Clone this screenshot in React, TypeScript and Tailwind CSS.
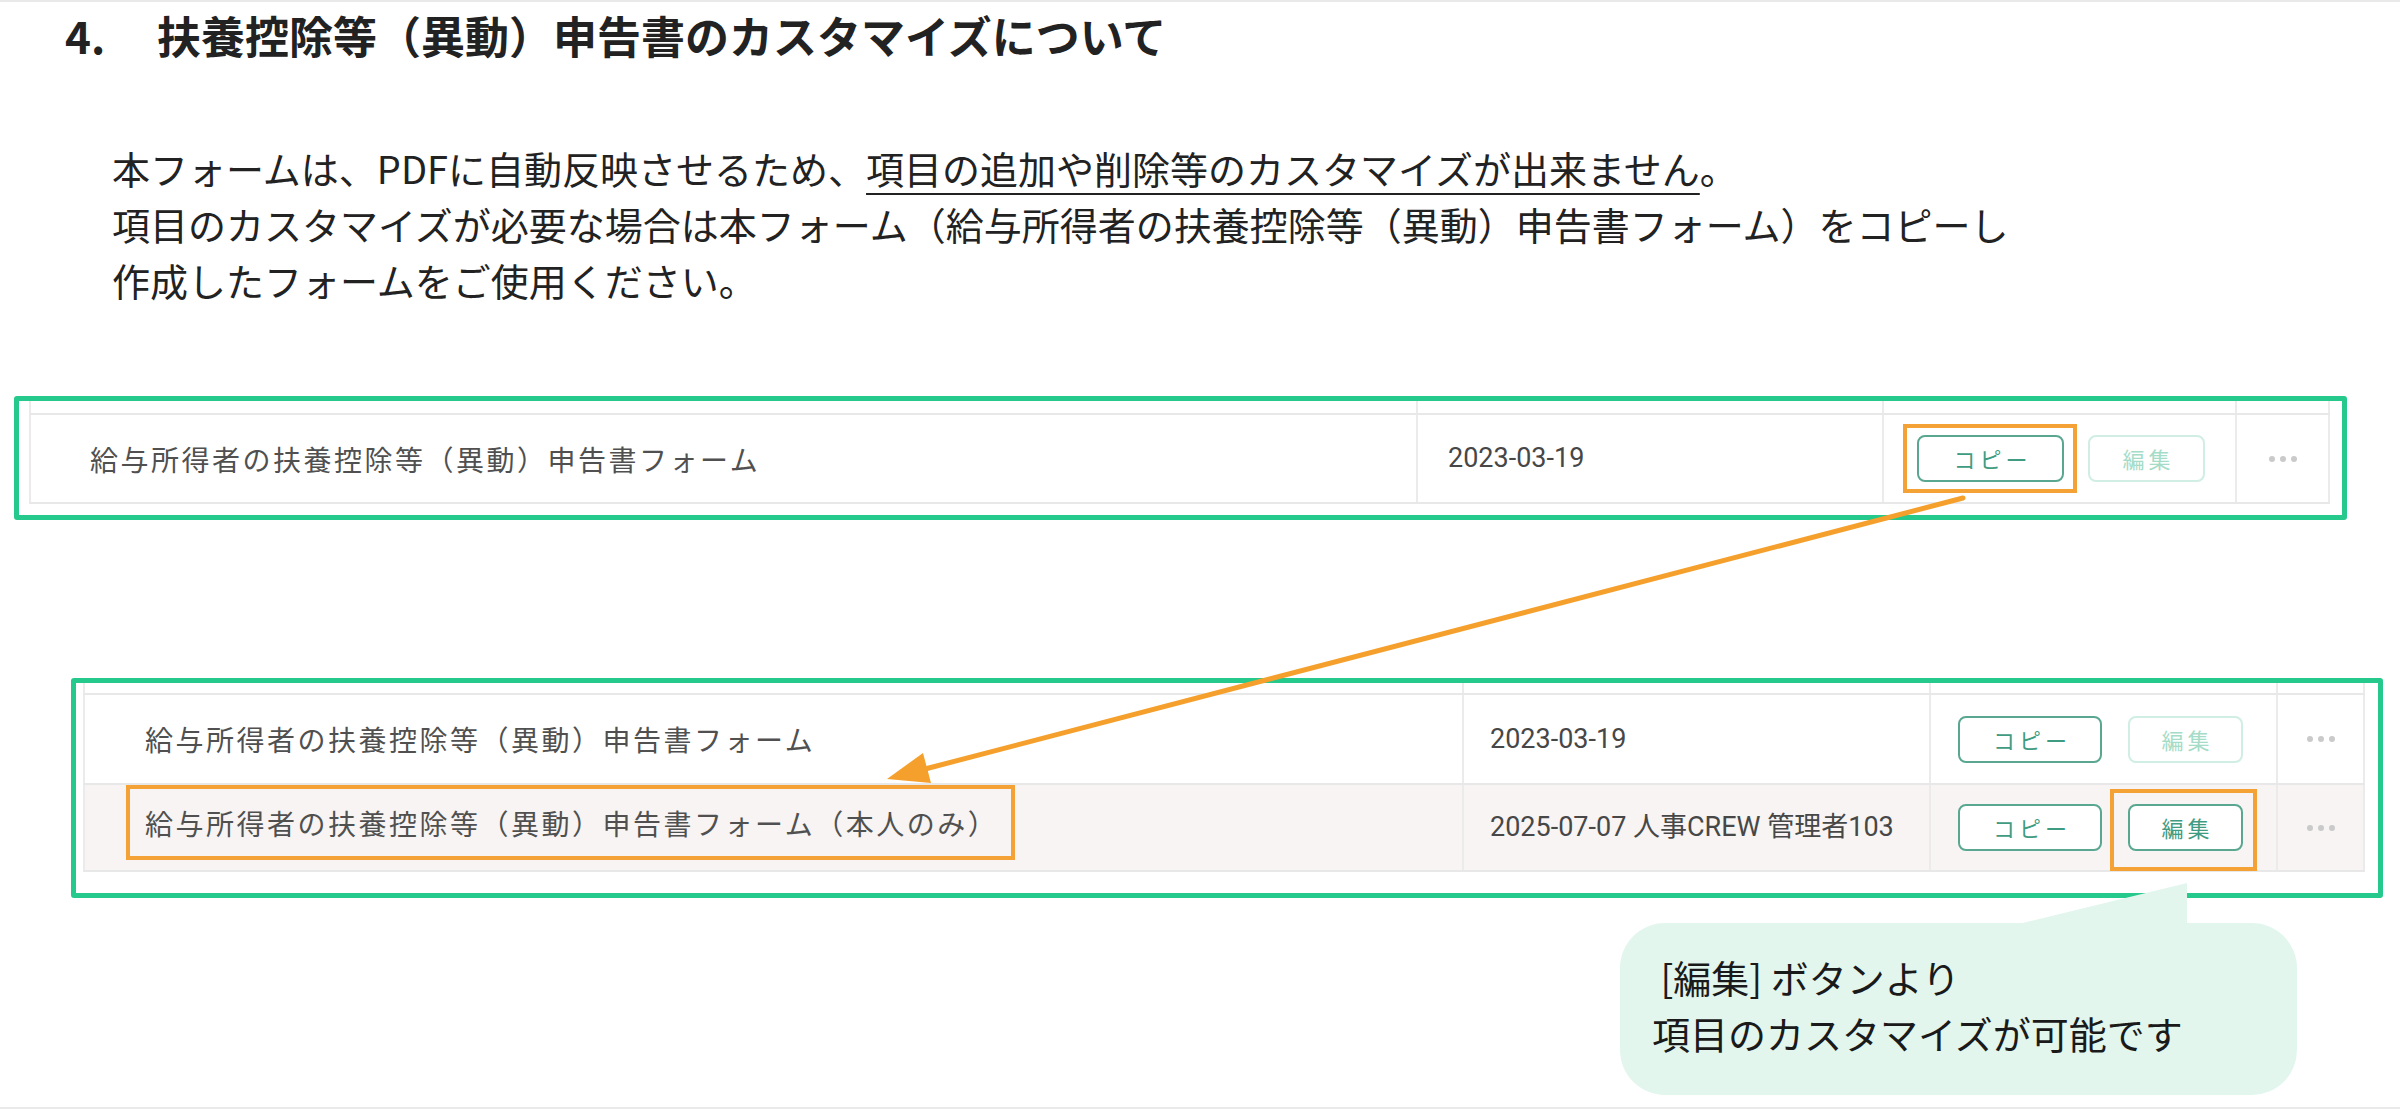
import React from "react";

const JP = "font-['Noto_Sans_CJK_JP','Noto_Sans',sans-serif]";
const RB = "font-['Roboto','Noto_Sans_CJK_JP',sans-serif]";

function Dots() {
  return (
    <div className="flex items-center justify-center gap-[5px]">
      <span className="block h-[6px] w-[6px] rounded-full bg-[#cacaca]" />
      <span className="block h-[6px] w-[6px] rounded-full bg-[#cacaca]" />
      <span className="block h-[6px] w-[6px] rounded-full bg-[#cacaca]" />
    </div>
  );
}

function CopyBtn({ wide }: { wide: boolean }) {
  return (
    <div
      className={`${JP} flex h-[47px] items-center justify-center rounded-[8px] border-2 border-[#5aa791] bg-white pl-[4px] text-[22px] tracking-[4px] text-[#3f9c82] ${
        wide ? "w-[147px]" : "w-[144px]"
      }`}
    >
      コピー
    </div>
  );
}

function EditBtn({ active, wide }: { active: boolean; wide: boolean }) {
  return (
    <div
      className={`${JP} flex h-[47px] items-center justify-center rounded-[8px] border-2 bg-white pl-[4px] text-[22px] tracking-[4px] ${
        active ? "border-[#5aa791] text-[#3f9c82]" : "border-[#d0eee3] text-[#a5dcc7]"
      } ${wide ? "w-[117px]" : "w-[115px]"}`}
    >
      編集
    </div>
  );
}

const LINE = "border-[#ebebeb]";

export default function App() {
  return (
    <div className={`${JP} relative h-[1109px] w-[2400px] overflow-hidden border-y-2 border-[#e9e9e9] bg-white`}>
      {/* Heading */}
      <h1 className="pl-[65px] text-[44px] font-bold leading-[66px] text-[#222222]">
        <span className="inline-block w-[92px]">4.</span>
        扶養控除等（異動）申告書のカスタマイズについて
      </h1>

      {/* Paragraph */}
      <div className="mt-[72px] pl-[112px] text-[38px] leading-[56px] text-[#222222]">
        <p>
          本フォームは、PDFに自動反映させるため、
          <span className="underline decoration-[2px] underline-offset-[9px]">
            項目の追加や削除等のカスタマイズが出来ません
          </span>
          。
        </p>
        <p>項目のカスタマイズが必要な場合は本フォーム（給与所得者の扶養控除等（異動）申告書フォーム）をコピーし</p>
        <p>作成したフォームをご使用ください。</p>
      </div>

      {/* Table 1 */}
      <div className="ml-[14px] mt-[88px] h-[124px] w-[2333px] rounded-[3px] border-[5px] border-[#24c98b] pl-[10px] pr-[12px]">
        <div className="grid h-[12px] grid-cols-[1387px_466px_353px_95px]">
          <div className={`border-l-2 ${LINE}`} />
          <div className={`border-l-2 ${LINE}`} />
          <div className={`border-l-2 ${LINE}`} />
          <div className={`border-x-2 ${LINE}`} />
        </div>
        <div className="grid h-[91px] grid-cols-[1387px_466px_353px_95px] border-y-2 border-[#e8e8e8]">
          <div className={`flex items-center border-l-2 ${LINE} pl-[59px] text-[28px] tracking-[2.5px] text-[#505050]`}>
            給与所得者の扶養控除等（異動）申告書フォーム
          </div>
          <div className={`${RB} flex items-center border-l-2 ${LINE} pl-[30px] text-[27px] text-[#474747]`}>
            2023-03-19
          </div>
          <div className={`flex items-center gap-[24px] border-l-2 ${LINE} pl-[33px]`}>
            <span className="relative block">
              <CopyBtn wide={true} />
              <span className="absolute -bottom-[11px] -left-[14px] -right-[13px] -top-[11px] border-[4px] border-[#f4a236]" />
            </span>
            <EditBtn active={false} wide={true} />
          </div>
          <div className={`flex items-center justify-center border-x-2 ${LINE}`}>
            <Dots />
          </div>
        </div>
      </div>

      {/* Table 2 */}
      <div className="ml-[71px] mt-[158px] h-[220px] w-[2312px] rounded-[3px] border-[5px] border-[#24c98b] pl-[7px] pr-[13px]">
        <div className="grid h-[10px] grid-cols-[1379px_467px_347px_89px]">
          <div className={`border-l-2 ${LINE}`} />
          <div className={`border-l-2 ${LINE}`} />
          <div className={`border-l-2 ${LINE}`} />
          <div className={`border-x-2 ${LINE}`} />
        </div>
        <div className="grid h-[90px] grid-cols-[1379px_467px_347px_89px] border-t-2 border-[#e8e8e8]">
          <div className={`flex items-center border-l-2 ${LINE} pl-[60px] text-[28px] tracking-[2.5px] text-[#505050]`}>
            給与所得者の扶養控除等（異動）申告書フォーム
          </div>
          <div className={`${RB} flex items-center border-l-2 ${LINE} pl-[26px] text-[27px] text-[#474747]`}>
            2023-03-19
          </div>
          <div className={`flex items-center gap-[26px] border-l-2 ${LINE} pl-[27px]`}>
            <CopyBtn wide={false} />
            <EditBtn active={false} wide={false} />
          </div>
          <div className={`flex items-center justify-center border-x-2 ${LINE}`}>
            <Dots />
          </div>
        </div>
        <div className="grid h-[89px] grid-cols-[1379px_467px_347px_89px] border-y-2 border-[#e8e8e8] bg-[#f7f4f3]">
          <div className={`relative flex items-center border-l-2 ${LINE} pb-[10px] pl-[60px] text-[28px] tracking-[2.5px] text-[#505050]`}>
            給与所得者の扶養控除等（異動）申告書フォーム（本人のみ）
            <span className="absolute left-[41px] top-0 h-[75px] w-[889px] border-[4px] border-[#f4a236]" />
          </div>
          <div className={`${RB} flex items-center border-l-2 ${LINE} pl-[26px] text-[27px] text-[#474747]`}>
            2025-07-07 人事CREW 管理者103
          </div>
          <div className={`flex items-center gap-[26px] border-l-2 ${LINE} pl-[27px]`}>
            <CopyBtn wide={false} />
            <span className="relative block">
              <EditBtn active={true} wide={false} />
              <span className="absolute -bottom-[20px] -left-[18px] -right-[14px] -top-[15px] border-[4px] border-[#f4a236]" />
            </span>
          </div>
          <div className={`flex items-center justify-center border-x-2 ${LINE}`}>
            <Dots />
          </div>
        </div>
      </div>

      {/* Speech bubble */}
      <div className="relative ml-[1620px] mt-[25px] h-[172px] w-[677px] rounded-[45px] bg-[#e2f6ee] pl-[32px] pt-[26px] text-[38px] leading-[56px] text-[#1a1a1a]">
        <svg
          className="absolute left-[394px] top-[-40px]"
          width="174"
          height="42"
          viewBox="0 0 174 42"
        >
          <polygon points="0,42 173,42 173,0" fill="#e2f6ee" />
        </svg>
        <p className="whitespace-pre"> [編集] ボタンより</p>
        <p>項目のカスタマイズが可能です</p>
      </div>

      {/* Arrow overlay */}
      <svg
        className="pointer-events-none absolute left-0 top-0"
        width="2400"
        height="1109"
        viewBox="0 0 2400 1109"
      >
        <line x1="1963" y1="496" x2="925" y2="767" stroke="#f5a02c" strokeWidth="5" strokeLinecap="round" />
        <polygon points="887,777 931,781 923,751" fill="#f5a02c" />
      </svg>
    </div>
  );
}
